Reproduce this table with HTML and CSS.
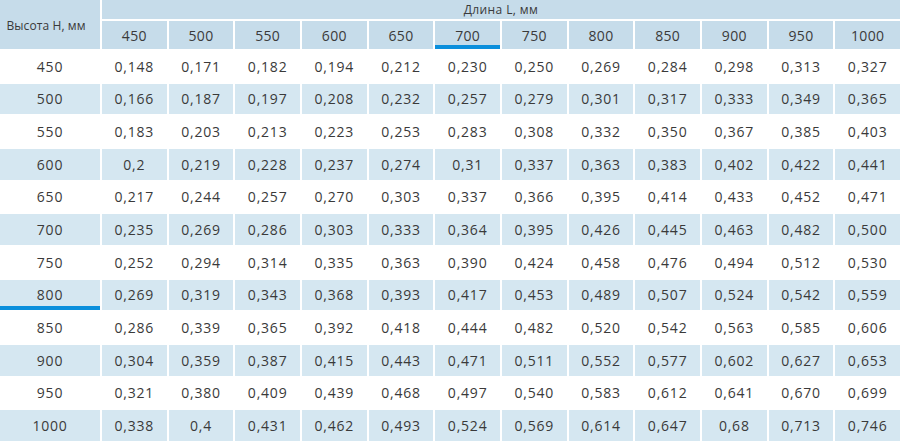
FILE: index.html
```html
<!DOCTYPE html>
<html lang="ru">
<head>
<meta charset="utf-8">
<title>Таблица</title>
<link rel="stylesheet" href="styles.css">
</head>
<body>
<div class="table">
  <div class="cell head corner">Высота Н, мм</div>
  <div class="cell head span">Длина L, мм</div>
  <div class="cell head">450</div>
  <div class="cell head">500</div>
  <div class="cell head">550</div>
  <div class="cell head">600</div>
  <div class="cell head">650</div>
  <div class="cell head mark">700</div>
  <div class="cell head">750</div>
  <div class="cell head">800</div>
  <div class="cell head">850</div>
  <div class="cell head">900</div>
  <div class="cell head">950</div>
  <div class="cell head">1000</div>

  <div class="cell">450</div><div class="cell">0,148</div><div class="cell">0,171</div><div class="cell">0,182</div><div class="cell">0,194</div><div class="cell">0,212</div><div class="cell">0,230</div><div class="cell">0,250</div><div class="cell">0,269</div><div class="cell">0,284</div><div class="cell">0,298</div><div class="cell">0,313</div><div class="cell">0,327</div>
  <div class="cell alt">500</div><div class="cell alt">0,166</div><div class="cell alt">0,187</div><div class="cell alt">0,197</div><div class="cell alt">0,208</div><div class="cell alt">0,232</div><div class="cell alt">0,257</div><div class="cell alt">0,279</div><div class="cell alt">0,301</div><div class="cell alt">0,317</div><div class="cell alt">0,333</div><div class="cell alt">0,349</div><div class="cell alt">0,365</div>
  <div class="cell">550</div><div class="cell">0,183</div><div class="cell">0,203</div><div class="cell">0,213</div><div class="cell">0,223</div><div class="cell">0,253</div><div class="cell">0,283</div><div class="cell">0,308</div><div class="cell">0,332</div><div class="cell">0,350</div><div class="cell">0,367</div><div class="cell">0,385</div><div class="cell">0,403</div>
  <div class="cell alt">600</div><div class="cell alt">0,2</div><div class="cell alt">0,219</div><div class="cell alt">0,228</div><div class="cell alt">0,237</div><div class="cell alt">0,274</div><div class="cell alt">0,31</div><div class="cell alt">0,337</div><div class="cell alt">0,363</div><div class="cell alt">0,383</div><div class="cell alt">0,402</div><div class="cell alt">0,422</div><div class="cell alt">0,441</div>
  <div class="cell">650</div><div class="cell">0,217</div><div class="cell">0,244</div><div class="cell">0,257</div><div class="cell">0,270</div><div class="cell">0,303</div><div class="cell">0,337</div><div class="cell">0,366</div><div class="cell">0,395</div><div class="cell">0,414</div><div class="cell">0,433</div><div class="cell">0,452</div><div class="cell">0,471</div>
  <div class="cell alt">700</div><div class="cell alt">0,235</div><div class="cell alt">0,269</div><div class="cell alt">0,286</div><div class="cell alt">0,303</div><div class="cell alt">0,333</div><div class="cell alt">0,364</div><div class="cell alt">0,395</div><div class="cell alt">0,426</div><div class="cell alt">0,445</div><div class="cell alt">0,463</div><div class="cell alt">0,482</div><div class="cell alt">0,500</div>
  <div class="cell">750</div><div class="cell">0,252</div><div class="cell">0,294</div><div class="cell">0,314</div><div class="cell">0,335</div><div class="cell">0,363</div><div class="cell">0,390</div><div class="cell">0,424</div><div class="cell">0,458</div><div class="cell">0,476</div><div class="cell">0,494</div><div class="cell">0,512</div><div class="cell">0,530</div>
  <div class="cell alt mark">800</div><div class="cell alt">0,269</div><div class="cell alt">0,319</div><div class="cell alt">0,343</div><div class="cell alt">0,368</div><div class="cell alt">0,393</div><div class="cell alt">0,417</div><div class="cell alt">0,453</div><div class="cell alt">0,489</div><div class="cell alt">0,507</div><div class="cell alt">0,524</div><div class="cell alt">0,542</div><div class="cell alt">0,559</div>
  <div class="cell">850</div><div class="cell">0,286</div><div class="cell">0,339</div><div class="cell">0,365</div><div class="cell">0,392</div><div class="cell">0,418</div><div class="cell">0,444</div><div class="cell">0,482</div><div class="cell">0,520</div><div class="cell">0,542</div><div class="cell">0,563</div><div class="cell">0,585</div><div class="cell">0,606</div>
  <div class="cell alt">900</div><div class="cell alt">0,304</div><div class="cell alt">0,359</div><div class="cell alt">0,387</div><div class="cell alt">0,415</div><div class="cell alt">0,443</div><div class="cell alt">0,471</div><div class="cell alt">0,511</div><div class="cell alt">0,552</div><div class="cell alt">0,577</div><div class="cell alt">0,602</div><div class="cell alt">0,627</div><div class="cell alt">0,653</div>
  <div class="cell">950</div><div class="cell">0,321</div><div class="cell">0,380</div><div class="cell">0,409</div><div class="cell">0,439</div><div class="cell">0,468</div><div class="cell">0,497</div><div class="cell">0,540</div><div class="cell">0,583</div><div class="cell">0,612</div><div class="cell">0,641</div><div class="cell">0,670</div><div class="cell">0,699</div>
  <div class="cell alt">1000</div><div class="cell alt">0,338</div><div class="cell alt">0,4</div><div class="cell alt">0,431</div><div class="cell alt">0,462</div><div class="cell alt">0,493</div><div class="cell alt">0,524</div><div class="cell alt">0,569</div><div class="cell alt">0,614</div><div class="cell alt">0,647</div><div class="cell alt">0,68</div><div class="cell alt">0,713</div><div class="cell alt">0,746</div>
</div>
</body>
</html>
```

FILE: styles.css
```css
html, body {
  margin: 0;
  padding: 0;
  background: #ffffff;
}

body {
  font-family: "Open Sans", "Noto Sans", sans-serif;
  color: #3a3a3a;
}

.table {
  display: grid;
  width: 900px;
  grid-template-columns: 100px repeat(12, 1fr);
  grid-template-rows: 19px 28px;
  grid-auto-rows: 30.67px;
  gap: 2px;
}

.cell {
  display: flex;
  align-items: center;
  justify-content: center;
  font-size: 14px;
  letter-spacing: 0.8px;
  background: #ffffff;
}

.head {
  background: #c6dcea;
  letter-spacing: 0.3px;
}

.corner {
  grid-row: 1 / 3;
  font-size: 12px;
  letter-spacing: 0.1px;
  padding: 2px 8px 0 0;
}

.span {
  grid-column: 2 / 14;
  font-size: 12px;
  letter-spacing: 0.4px;
}

.alt {
  background: #d5e7f1;
}

.mark {
  box-shadow: inset 0 -4px 0 #0b8fdc;
}
```
